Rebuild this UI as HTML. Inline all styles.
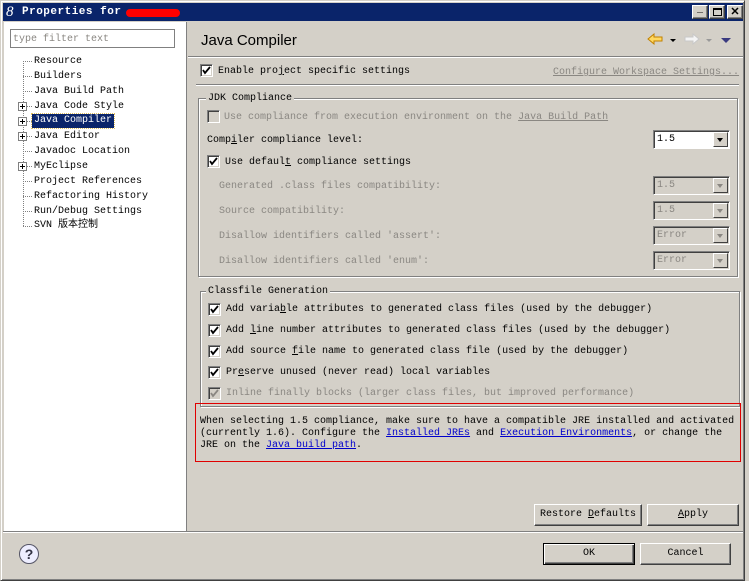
<!DOCTYPE html>
<html><head><meta charset="utf-8"><style>
*{margin:0;padding:0;box-sizing:border-box}
body{width:749px;height:581px;background:#d4d0c8;position:relative;overflow:hidden;font-family:"Liberation Mono","Noto Sans CJK SC",monospace;font-size:10px;color:#000}
.a{position:absolute;white-space:nowrap;line-height:12px;padding-top:1px}
.g{color:#8a8782}
.u{text-decoration:underline}
.lk{color:#0000cc;text-decoration:underline}
.cb{position:absolute;width:13px;height:13px;background:#fff;border:1px solid;border-color:#808080 #fff #fff #808080;box-shadow:inset 1px 1px 0 #404040,inset -1px -1px 0 #d4d0c8}
.cb svg{position:absolute;left:1px;top:1px}
.grp{position:absolute;border:1px solid #808080;box-shadow:1px 1px 0 #fff,inset 1px 1px 0 #fff}
.gl{position:absolute;background:#d4d0c8;padding:1px 2px 0;line-height:12px}
.combo{position:absolute;height:19px;border:1px solid;border-color:#808080 #fff #fff #808080;background:#fff;box-shadow:inset 1px 1px 0 #404040}
.combo .t{position:absolute;left:3px;top:3px;line-height:12px}
.combo .b{position:absolute;right:1px;top:1px;width:15px;height:15px;background:#d4d0c8;border:1px solid;border-color:#fff #404040 #404040 #fff}
.combo .b:after{content:"";position:absolute;left:3px;top:5px;border:3.5px solid transparent;border-top:4px solid #000}
.combo.dis{background:#d4d0c8}
.combo.dis .t{color:#8a8782}
.combo.dis .b:after{border-top-color:#8a8782}
.btn{position:absolute;height:22px;background:#d4d0c8;border:1px solid;border-color:#fff #404040 #404040 #fff;box-shadow:inset -1px -1px 0 #808080;text-align:center;line-height:19px}
.tree{position:absolute;left:34px;line-height:12px;padding-top:1px}
.pl{position:absolute;left:18px;width:9px;height:9px;border:1px solid #808080;background:#fff}
.pl:before{content:"";position:absolute;left:1px;top:3px;width:5px;height:1px;background:#000}
.pl:after{content:"";position:absolute;left:3px;top:1px;width:1px;height:5px;background:#000}
.dh{position:absolute;left:23px;width:9px;border-top:1px dotted #808080}
</style></head><body>
<div style="position:absolute;left:0;top:0;width:745px;height:581px;border:1px solid;border-color:#d4d0c8 #404040 #404040 #d4d0c8;box-shadow:inset 1px 1px 0 #fff,inset -1px -1px 0 #808080"></div>
<div style="position:absolute;left:3px;top:3px;width:740px;height:18px;background:#0a246a"></div>
<div class="a" style="left:6px;top:3px;color:#fff;font-family:'Liberation Serif',serif;font-style:italic;font-size:15px;line-height:16px">8</div>
<div class="a" style="left:22px;top:5px;color:#fff;font-weight:bold;font-size:11px;letter-spacing:0.5px">Properties for</div>
<div style="position:absolute;left:126px;top:9px;width:54px;height:8px;background:#f00;border-radius:4px"></div>
<div class="btn" style="left:692px;top:5px;width:16px;height:14px;line-height:10px;font-size:10px">_</div>
<div class="btn" style="left:709px;top:5px;width:16px;height:14px"><div style="position:absolute;left:3px;top:2px;width:9px;height:8px;border:1px solid #000;border-top-width:2px"></div></div>
<div class="btn" style="left:727px;top:5px;width:16px;height:14px;line-height:12px;font-weight:bold;font-family:'Liberation Sans',sans-serif;font-size:11px">✕</div>
<div style="position:absolute;left:4px;top:22px;width:183px;height:509px;background:#fff;border-right:1px solid #808080"></div>
<div style="position:absolute;left:10px;top:29px;width:165px;height:19px;border:1px solid #808080;background:#fff"></div>
<div class="a g" style="left:13px;top:33px">type filter text</div>
<div style="position:absolute;left:23px;top:61px;height:165px;border-left:1px dotted #808080"></div>
<div class="dh" style="top:61px"></div><div class="tree" style="top:55px">Resource</div>
<div class="dh" style="top:76px"></div><div class="tree" style="top:70px">Builders</div>
<div class="dh" style="top:91px"></div><div class="tree" style="top:85px">Java Build Path</div>
<div class="dh" style="top:106px"></div><div class="pl" style="top:102px"></div><div class="tree" style="top:100px">Java Code Style</div>
<div class="dh" style="top:121px"></div><div class="pl" style="top:117px"></div><div class="tree" style="top:114px;left:32px;background:#0a246a;color:#fff;padding:1px 2px;outline:1px dotted #e0c060">Java Compiler</div>
<div class="dh" style="top:136px"></div><div class="pl" style="top:132px"></div><div class="tree" style="top:130px">Java Editor</div>
<div class="dh" style="top:151px"></div><div class="tree" style="top:145px">Javadoc Location</div>
<div class="dh" style="top:166px"></div><div class="pl" style="top:162px"></div><div class="tree" style="top:160px">MyEclipse</div>
<div class="dh" style="top:181px"></div><div class="tree" style="top:175px">Project References</div>
<div class="dh" style="top:196px"></div><div class="tree" style="top:190px">Refactoring History</div>
<div class="dh" style="top:211px"></div><div class="tree" style="top:205px">Run/Debug Settings</div>
<div class="dh" style="top:226px"></div><div class="tree" style="top:219px">SVN 版本控制</div>
<div class="a" style="left:201px;top:31px;font-family:'Liberation Sans',sans-serif;font-size:15px;line-height:18px">Java Compiler</div>
<svg style="position:absolute;left:647px;top:33px" width="16" height="12"><path d="M1 6L7 1V4H15V8H7V11Z" fill="#ffd860" stroke="#c08000"/></svg>
<div style="position:absolute;left:670px;top:39px;border:3px solid transparent;border-top:3px solid #000"></div>
<svg style="position:absolute;left:684px;top:33px" width="16" height="12"><path d="M15 6L9 1V4H1V8H9V11Z" fill="#f4f4f4" stroke="#c8c8c8"/></svg>
<div style="position:absolute;left:706px;top:39px;border:3px solid transparent;border-top:3px solid #999"></div>
<div style="position:absolute;left:721px;top:38px;border:5px solid transparent;border-top:5px solid #3a3a80"></div>
<div style="position:absolute;left:188px;top:56px;width:555px;border-top:1px solid #808080;border-bottom:1px solid #fff"></div>
<div class="cb" style="left:200px;top:64px"><svg width="9" height="9"><path d="M1 4l2 3 5-6" stroke="#000" stroke-width="1.8" fill="none"/></svg></div>
<div class="a" style="left:218px;top:65px">Enable pro<span class="u">j</span>ect specific settings</div>
<div class="a g u" style="left:553px;top:66px">Configure Workspace Settings...</div>
<div style="position:absolute;left:196px;top:84px;width:543px;border-top:1px solid #808080;border-bottom:1px solid #fff"></div>
<div class="grp" style="left:198px;top:98px;width:540px;height:179px"></div>
<div class="gl" style="left:206px;top:92px">JDK Compliance</div>
<div class="cb" style="left:207px;top:110px;background:#d4d0c8"></div>
<div class="a g" style="left:224px;top:111px">Use compliance from execution environment on the <span class="u">Java Build Path</span></div>
<div class="a" style="left:207px;top:134px">Comp<span class="u">i</span>ler compliance level:</div>
<div class="combo" style="left:653px;top:130px;width:77px"><span class="t">1.5</span><span class="b"></span></div>
<div class="cb" style="left:207px;top:155px"><svg width="9" height="9"><path d="M1 4l2 3 5-6" stroke="#000" stroke-width="1.8" fill="none"/></svg></div>
<div class="a" style="left:225px;top:156px">Use defaul<span class="u">t</span> compliance settings</div>
<div class="a g" style="left:219px;top:180px">Generated .class files compatibility:</div>
<div class="combo dis" style="left:653px;top:176px;width:77px"><span class="t">1.5</span><span class="b"></span></div>
<div class="a g" style="left:219px;top:205px">Source compatibility:</div>
<div class="combo dis" style="left:653px;top:201px;width:77px"><span class="t">1.5</span><span class="b"></span></div>
<div class="a g" style="left:219px;top:230px">Disallow identifiers called 'assert':</div>
<div class="combo dis" style="left:653px;top:226px;width:77px"><span class="t">Error</span><span class="b"></span></div>
<div class="a g" style="left:219px;top:255px">Disallow identifiers called 'enum':</div>
<div class="combo dis" style="left:653px;top:251px;width:77px"><span class="t">Error</span><span class="b"></span></div>
<div class="grp" style="left:200px;top:291px;width:540px;height:116px"></div>
<div class="gl" style="left:206px;top:285px">Classfile Generation</div>
<div class="cb" style="left:208px;top:303px"><svg width="9" height="9"><path d="M1 4l2 3 5-6" stroke="#000" stroke-width="1.8" fill="none"/></svg></div>
<div class="a" style="left:226px;top:303px">Add varia<span class="u">b</span>le attributes to generated class files (used by the debugger)</div>
<div class="cb" style="left:208px;top:324px"><svg width="9" height="9"><path d="M1 4l2 3 5-6" stroke="#000" stroke-width="1.8" fill="none"/></svg></div>
<div class="a" style="left:226px;top:324px">Add <span class="u">l</span>ine number attributes to generated class files (used by the debugger)</div>
<div class="cb" style="left:208px;top:345px"><svg width="9" height="9"><path d="M1 4l2 3 5-6" stroke="#000" stroke-width="1.8" fill="none"/></svg></div>
<div class="a" style="left:226px;top:345px">Add source <span class="u">f</span>ile name to generated class file (used by the debugger)</div>
<div class="cb" style="left:208px;top:366px"><svg width="9" height="9"><path d="M1 4l2 3 5-6" stroke="#000" stroke-width="1.8" fill="none"/></svg></div>
<div class="a" style="left:226px;top:366px">Pr<span class="u">e</span>serve unused (never read) local variables</div>
<div class="cb" style="left:208px;top:387px;background:#d4d0c8"><svg width="9" height="9"><path d="M1 4l2 3 5-6" stroke="#8a8782" stroke-width="1.8" fill="none"/></svg></div>
<div class="a g" style="left:226px;top:387px">Inline finally blocks (larger class files, but improved performance)</div>
<div style="position:absolute;left:195px;top:403px;width:546px;height:59px;border:1px solid #e00000"></div>
<div class="a" style="left:200px;top:415px">When selecting 1.5 compliance, make sure to have a compatible JRE installed and activated</div>
<div class="a" style="left:200px;top:427px">(currently 1.6). Configure the <span class="lk">Installed JREs</span> and <span class="lk">Execution Environments</span>, or change the</div>
<div class="a" style="left:200px;top:439px">JRE on the <span class="lk">Java build path</span>.</div>
<div class="btn" style="left:534px;top:504px;width:108px">Restore <span class="u">D</span>efaults</div>
<div class="btn" style="left:647px;top:504px;width:92px"><span class="u">A</span>pply</div>
<div style="position:absolute;left:3px;top:531px;width:740px;border-top:1px solid #808080;border-bottom:1px solid #fff"></div>
<div style="position:absolute;left:19px;top:544px;width:20px;height:20px;border-radius:50%;background:#eef;border:1px solid #556;text-align:center;font:bold 14px/18px 'Liberation Sans',sans-serif;color:#334">?</div>
<div class="btn" style="left:543px;top:543px;width:92px;border:1px solid #000;box-shadow:inset 1px 1px 0 #fff,inset -1px -1px 0 #404040,inset -2px -2px 0 #808080">OK</div>
<div class="btn" style="left:640px;top:543px;width:91px">Cancel</div>
</body></html>
